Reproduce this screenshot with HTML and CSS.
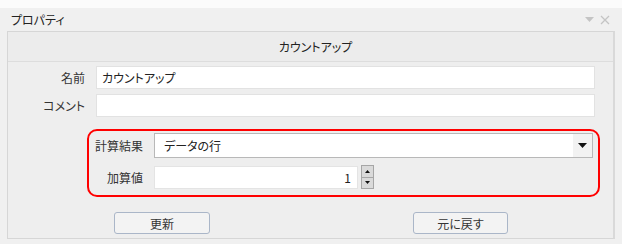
FILE: index.html
```html
<!DOCTYPE html>
<html lang="ja">
<head>
<meta charset="utf-8">
<link rel="stylesheet" href="styles.css">
</head>
<body>
<div class="topstrip"></div>
<div class="titlebar">
  <span class="title">プロパティ</span>
  <span class="wincontrols">
    <svg width="9" height="6" viewBox="0 0 9 6"><path d="M0 0 H9 L4.5 5 Z" fill="#c4c4c4"/></svg>
    <svg width="10" height="10" viewBox="0 0 10 10"><path d="M1 1 L9 9 M9 1 L1 9" stroke="#c4c4c4" stroke-width="1.3"/></svg>
  </span>
</div>
<div class="panel">
  <div class="header">カウントアップ</div>
  <div class="body">
    <div class="row">
      <label class="lbl">名前</label>
      <div class="input">カウントアップ</div>
    </div>
    <div class="row">
      <label class="lbl">コメント</label>
      <div class="input"></div>
    </div>
    <div class="highlight">
      <div class="hrow">
        <label class="lbl2">計算結果</label>
        <div class="select">
          <span class="seltext">データの行</span>
          <span class="selbtn"><svg width="9" height="5" viewBox="0 0 9 5"><path d="M0 0 H9 L4.5 5 Z" fill="#111"/></svg></span>
        </div>
      </div>
      <div class="hrow">
        <label class="lbl2">加算値</label>
        <div class="num">1</div>
        <div class="spin">
          <div class="sbtn"><svg width="5" height="3" viewBox="0 0 5 3"><path d="M0 3 H5 L2.5 0 Z" fill="#111"/></svg></div>
          <div class="sbtn"><svg width="5" height="3" viewBox="0 0 5 3"><path d="M0 0 H5 L2.5 3 Z" fill="#111"/></svg></div>
        </div>
      </div>
    </div>
    <div class="buttons">
      <button class="btn b1">更新</button>
      <button class="btn b2">元に戻す</button>
    </div>
  </div>
</div>
</body>
</html>
```

FILE: styles.css
```css
* { box-sizing: border-box; }
html, body { margin: 0; padding: 0; }
body {
  width: 622px;
  height: 244px;
  background: #f0f0f0;
  font-family: "Noto Sans CJK JP", "Noto Sans", sans-serif;
  font-size: 12px;
  font-feature-settings: "palt";
  color: #222;
  overflow: hidden;
}
.topstrip { height: 8px; background: #fbfbfb; }
.titlebar {
  height: 23px;
  display: flex;
  align-items: center;
  justify-content: space-between;
  padding: 0 12px 0 11px;
}
.title { font-size: 12px; color: #222; }
.wincontrols { display: flex; align-items: center; gap: 6px; }
.panel {
  margin-left: 7px;
  width: 608px;
  height: 208px;
  border: 1px solid #d6d6d6;
  border-right: 2px solid #d9d9d9;
  background: #eeeeee;
}
.header {
  height: 30px;
  display: flex;
  align-items: center;
  justify-content: center;
  background: #ececec;
  border-bottom: 1px solid #dddddd;
  font-size: 12px;
  color: #222;
  padding-left: 10px;
}
.body { padding-top: 4px; }
.row {
  display: flex;
  align-items: center;
  margin-bottom: 5px;
}
.lbl {
  width: 77px;
  text-align: right;
  margin-right: 11px;
  color: #333;
}
.input {
  width: 499px;
  height: 23px;
  background: #fff;
  border: 1px solid #e2e2e2;
  padding: 0 5px;
  line-height: 21px;
}
.highlight {
  margin: 12px 0 0 79px;
  width: 513px;
  height: 68px;
  border: 2px solid #ff0000;
  border-radius: 10px;
  padding: 2px 5px 0 0;
}
.hrow {
  display: flex;
  align-items: center;
  margin-bottom: 7px;
}
.lbl2 {
  width: 54px;
  text-align: right;
  margin-right: 11px;
  color: #333;
}
.select {
  width: 439px;
  height: 25px;
  display: flex;
  background: #fff;
  border: 1px solid #b8b8b8;
}
.seltext { flex: 1; padding-left: 9px; line-height: 23px; }
.selbtn {
  width: 19px;
  background: #f2f2f2;
  display: flex;
  align-items: center;
  justify-content: center;
}
.num {
  width: 204px;
  height: 23px;
  background: #fff;
  border: 1px solid #e4e4e4;
  text-align: right;
  padding-right: 6px;
  line-height: 21px;
}
.spin {
  margin-left: 3px;
  width: 13px;
  height: 24px;
  display: flex;
  flex-direction: column;
}
.sbtn {
  flex: 1;
  background: #dadada;
  border: 1px solid #a6a6a6;
  display: flex;
  align-items: center;
  justify-content: center;
}
.sbtn + .sbtn { border-top: none; }
.buttons {
  display: flex;
  margin-top: 15px;
}
.btn {
  height: 22px;
  font-family: inherit;
  font-size: 12px;
  font-feature-settings: "palt";
  color: #333;
  background: #f3f3f3;
  border: 1px solid #aab6c8;
  border-radius: 3px;
  padding: 0;
}
.b1 { width: 96px; margin-left: 106px; }
.b2 { width: 95px; margin-left: 203px; }
```
